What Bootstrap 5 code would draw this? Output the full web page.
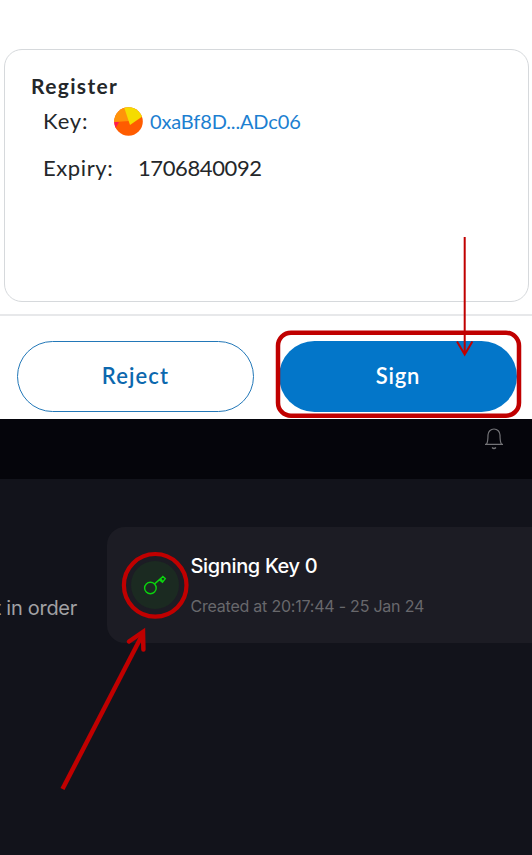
<!DOCTYPE html>
<html lang="en">
<head>
<meta charset="utf-8">
<meta name="viewport" content="width=device-width, initial-scale=1">
<title>Signing key</title>
<link href="https://cdn.jsdelivr.net/npm/bootstrap@5.3.0/dist/css/bootstrap.min.css" rel="stylesheet">
<style>
body{width:532px;height:855px;background:#12131b;font-family:Lato,sans-serif}
.request{height:419px;padding-top:49px;background:#fff;color:#24272a}
.message{width:525px;height:253px;margin-left:4px;padding:21px 25px;border:1px solid #d6d9dc;border-radius:18px}
.line{height:30px;line-height:30px;font-size:22px;white-space:nowrap}
.heading{font-size:21px;letter-spacing:1.35px;padding-left:1px}
.key-row{margin-top:5px;padding-left:13px}
.expiry-row{margin-top:17px;padding-left:13px}
.key-label{width:71px;letter-spacing:.9px}
.expiry-label{width:95px;letter-spacing:.6px}
.expiry-value{letter-spacing:-.4px}
.address{font-size:20px;color:#1c7fd1;margin-left:7px;margin-top:-1px;letter-spacing:-.15px}
.actions{margin-top:12px;height:105px;padding:25px 15px 8px 17px;border-top:2px solid #e7e8ea}
.action{width:237px;height:71px;border-radius:36px;font-size:22px;line-height:30px;padding:0 0 2px;font-weight:600;letter-spacing:1.1px}
.reject{color:#0c68ae;border:1px solid #2378b8}
.sign{width:238px;background:#0376c9;color:#fff;border:0;letter-spacing:.8px}
.topbar{height:60px;background:#05050b;padding:8px 27px 0 0}
.workspace{height:376px;padding-top:48px;font-family:Inter,sans-serif}
.hint{width:107px;padding-top:66px;padding-right:30px;line-height:30px;font-size:20px;letter-spacing:-.28px;color:#a1a1a4;white-space:nowrap;overflow:hidden}
.key-card{height:116px;border-radius:18px 0 0 18px;background:#1c1c24;padding:24px 0 0 24px}
.key-icon{width:48px;height:48px;margin-top:10px;background:#1b2a21}
.key-text{padding-left:11.5px;white-space:nowrap}
.key-title{font-size:20px;line-height:30px;color:#fff;font-weight:500;letter-spacing:-.35px}
.key-date{font-size:16px;line-height:24px;color:#68686c;margin-top:13px;letter-spacing:-.22px}
.annotations{pointer-events:none}
</style>
<script src="https://cdn.jsdelivr.net/npm/bootstrap@5.3.0/dist/js/bootstrap.bundle.min.js"></script>
</head>
<body class="position-relative overflow-hidden">
<section class="request">
  <div class="message">
    <div class="line heading fw-bold">Register</div>
    <div class="line key-row d-flex align-items-center">
      <span class="key-label">Key:</span>
      <svg width="29" height="29" viewBox="0 0 29 29" class="flex-shrink-0">
        <clipPath id="avatar"><circle cx="14.5" cy="14.5" r="14.3"/></clipPath>
        <g clip-path="url(#avatar)"><path fill="#ff5c00" d="M0 0h29v29H0z"/><path fill="#ff930a" d="M0 0h11l5 14-16 1z"/><path fill="#f5dc00" d="M10 0h19v9L16 18z"/><path fill="#ff1a50" d="M0 15l5 0-4 7H0z"/></g>
      </svg>
      <span class="address">0xaBf8D...ADc06</span>
    </div>
    <div class="line expiry-row d-flex"><span class="expiry-label">Expiry:</span><span class="expiry-value">1706840092</span></div>
  </div>
  <div class="actions d-flex justify-content-between">
    <button class="btn action reject">Reject</button>
    <button class="btn action sign">Sign</button>
  </div>
</section>
<header class="topbar d-flex justify-content-end">
  <svg width="22" height="24" viewBox="0 0 22 24" fill="none" stroke="#747478" stroke-width="1.2"><path d="M2 17.3h18M3.5 17c1.5-2 1.5-4 1.5-9a6 6 0 0 1 12 0c0 5 0 7 1.5 9M9 20.5q2 2 4 0"/></svg>
</header>
<main class="workspace d-flex">
  <div class="hint d-flex justify-content-end">t in order</div>
  <div class="key-card d-flex flex-grow-1">
    <div class="key-icon rounded-circle d-flex align-items-center justify-content-center flex-shrink-0">
      <svg width="24" height="24" viewBox="0 0 24 24" fill="none" stroke="#0bd30e" stroke-width="1.4"><circle cx="7.4" cy="15" r="5.8"/><path d="M11.6 10.9 19.9 3.6M19.3 3l3 2.7-2.8 3.6-2.9-2.3M17.5 6l2 1.8"/></svg>
    </div>
    <div class="key-text"><div class="key-title">Signing Key 0</div><div class="key-date">Created at 20:17:44 - 25 Jan 24</div></div>
  </div>
</main>
<svg class="annotations position-absolute top-0 start-0" width="532" height="855" viewBox="0 0 532 855" fill="none" stroke="#c00000">
  <rect x="278" y="332.7" width="241" height="83" rx="13" stroke-width="4.5"/>
  <path d="M464.7 237v117M457 341.5l7.7 13 7.7-13" stroke-width="2"/>
  <circle cx="155.2" cy="585.3" r="31.3" stroke-width="4.2"/>
  <path d="M62.5 789 143 633.5" stroke-width="4.5"/><path d="M129 641.5 143 632l.4 17.5" stroke-width="4.5" stroke-linecap="round"/>
</svg>
</body>
</html>
